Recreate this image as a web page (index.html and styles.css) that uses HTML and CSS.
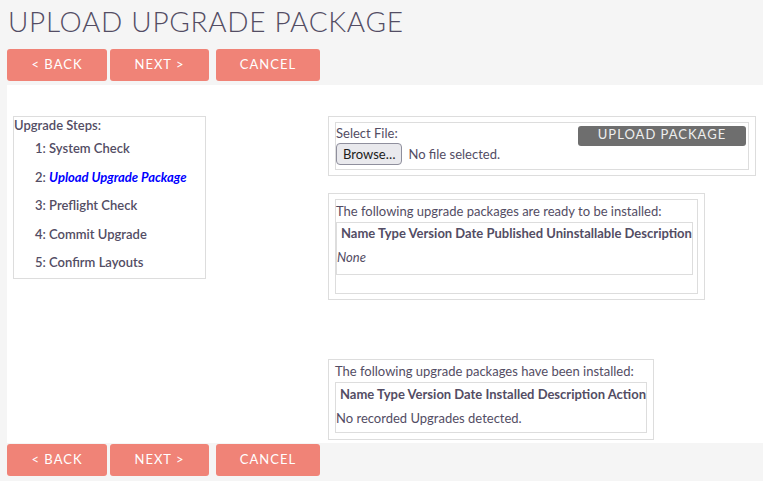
FILE: index.html
```html
<!DOCTYPE html>
<html>
<head>
<meta charset="utf-8">
<link rel="stylesheet" href="styles.css">
</head>
<body>
<h2 class="title">UPLOAD UPGRADE PACKAGE</h2>
<div class="btn-row">
  <button class="btn btn-back">&lt; BACK</button>
  <button class="btn btn-next">NEXT &gt;</button>
  <button class="btn btn-cancel">CANCEL</button>
</div>
<div class="panel">
  <div class="left">
    <div class="steps">
      <div class="steps-head">Upgrade Steps:</div>
      <ul class="step-list">
        <li>1: System Check</li>
        <li>2: <span class="current">Upload Upgrade Package</span></li>
        <li>3: Preflight Check</li>
        <li>4: Commit Upgrade</li>
        <li>5: Confirm Layouts</li>
      </ul>
    </div>
  </div>
  <div class="right">
    <div class="frame frame-upload">
      <div class="inner upload-inner">
        <div class="file-col">
          <div class="label">Select File:</div>
          <div class="file-input"><span class="browse">Browse…</span><span class="nofile">No file selected.</span></div>
        </div>
        <button class="btn-upload">UPLOAD PACKAGE</button>
      </div>
    </div>
    <div class="frame frame-ready">
      <div class="inner ready-inner">
        <div class="caption">The following upgrade packages are ready to be installed:</div>
        <table class="pkg">
          <tr><th>Name Type Version Date Published Uninstallable Description</th></tr>
          <tr><td class="none">None</td></tr>
        </table>
      </div>
    </div>
    <div class="frame frame-installed">
      <div class="caption">The following upgrade packages have been installed:</div>
      <table class="pkg pkg-installed">
        <tr><th>Name Type Version Date Installed Description Action</th></tr>
        <tr><td>No recorded Upgrades detected.</td></tr>
      </table>
    </div>
  </div>
</div>
<div class="btn-row btn-row-bottom">
  <button class="btn btn-back">&lt; BACK</button>
  <button class="btn btn-next">NEXT &gt;</button>
  <button class="btn btn-cancel">CANCEL</button>
</div>
</body>
</html>
```
FILE: styles.css
```css
html, body {
  margin: 0;
  padding: 0;
}
body {
  background: #f5f5f5;
  font-family: Lato, "Open Sans", sans-serif;
  font-size: 13px;
  color: #534d64;
  width: 763px;
  height: 481px;
  overflow: hidden;
}
.title {
  margin: 0;
  padding: 5px 0 0 8px;
  height: 43px;
  box-sizing: border-box;
  font-weight: 300;
  font-size: 28px;
  line-height: 32px;
  letter-spacing: 0.7px;
  color: #534d64;
}
.btn-row {
  display: flex;
  padding-left: 7px;
  height: 32px;
  margin-top: 6px;
}
.btn {
  height: 32px;
  border: none;
  border-radius: 3px;
  background: #f08377;
  color: #fff;
  font-family: Lato, sans-serif;
  font-size: 13px;
  letter-spacing: 1px;
  padding: 0 0 3px 0;
  margin: 0;
}
.btn-back { width: 100px; }
.btn-next { width: 99px; margin-left: 3px; }
.btn-cancel { width: 104px; margin-left: 7px; }
.btn-row-bottom {
  margin-top: 1px;
}
.panel {
  margin-top: 4px;
  margin-left: 7px;
  background: #fff;
  height: 358px;
  display: flex;
  padding-top: 31px;
  box-sizing: border-box;
}
.left {
  width: 321px;
  padding-left: 6px;
  box-sizing: border-box;
}
.steps {
  width: 193px;
  height: 163px;
  box-sizing: border-box;
  border: 1px solid #ddd;
}
.steps-head {
  font-weight: 600;
  line-height: 16px;
}
.step-list {
  list-style: none;
  margin: 0;
  padding: 0 0 0 21px;
}
.step-list li {
  font-weight: 600;
  line-height: 16px;
  height: 28.6px;
  padding-top: 7px;
  box-sizing: border-box;
}
.current {
  color: #0000ff;
  font-style: italic;
  font-weight: 700;
}
.right {
  display: flex;
  flex-direction: column;
  align-items: flex-start;
}
.frame {
  border: 1px solid #ddd;
  padding: 5px 6px 5px 6px;
  box-sizing: border-box;
  background: #fff;
}
.inner {
  border: 1px solid #ddd;
}
.frame-upload {
  width: 428px;
  height: 60px;
}
.upload-inner {
  height: 48px;
  box-sizing: border-box;
  display: flex;
  justify-content: space-between;
  padding: 2px 2px 0 0;
}
.label {
  line-height: 17px;
}
.file-input {
  display: flex;
  align-items: center;
  margin-top: 1px;
}
.browse {
  display: inline-block;
  height: 22px;
  box-sizing: border-box;
  padding: 0 6px;
  line-height: 20px;
  background: #e9e9ed;
  border: 1px solid #8f8f9d;
  border-radius: 4px;
  color: #1b1b1b;
  font-size: 13px;
}
.nofile {
  margin-left: 6px;
}
.btn-upload {
  width: 168px;
  height: 20px;
  border: none;
  border-radius: 3px;
  background: #6e6e6e;
  color: #eee;
  font-family: Lato, sans-serif;
  font-size: 13px;
  letter-spacing: 1px;
  padding: 0 0 4px 0;
  margin-top: 1px;
}
.frame-ready {
  margin-top: 17px;
  height: 107px;
}
.ready-inner {
  height: 95px;
  box-sizing: border-box;
  padding-right: 4px;
}
.caption {
  line-height: 16px;
  padding-top: 3px;
}
.pkg {
  border: 1px solid #ddd;
  border-collapse: collapse;
  margin-top: 3px;
  width: 100%;
}
.pkg th {
  text-align: left;
  font-weight: 700;
  padding: 2px 0 6px 4px;
  line-height: 16px;
}
.pkg td {
  padding: 2px 0 9px 0;
  line-height: 16px;
}
.pkg .none {
  font-style: italic;
}
.frame-installed {
  margin-top: 59px;
  height: 81px;
  padding: 0 6px 5px 6px;
}
.pkg-installed {
  margin-top: 3px;
}
.pkg-installed th {
  padding: 3px 0 5px 4px;
}
.pkg-installed td {
  padding: 3px 0 6px 0;
}
```
